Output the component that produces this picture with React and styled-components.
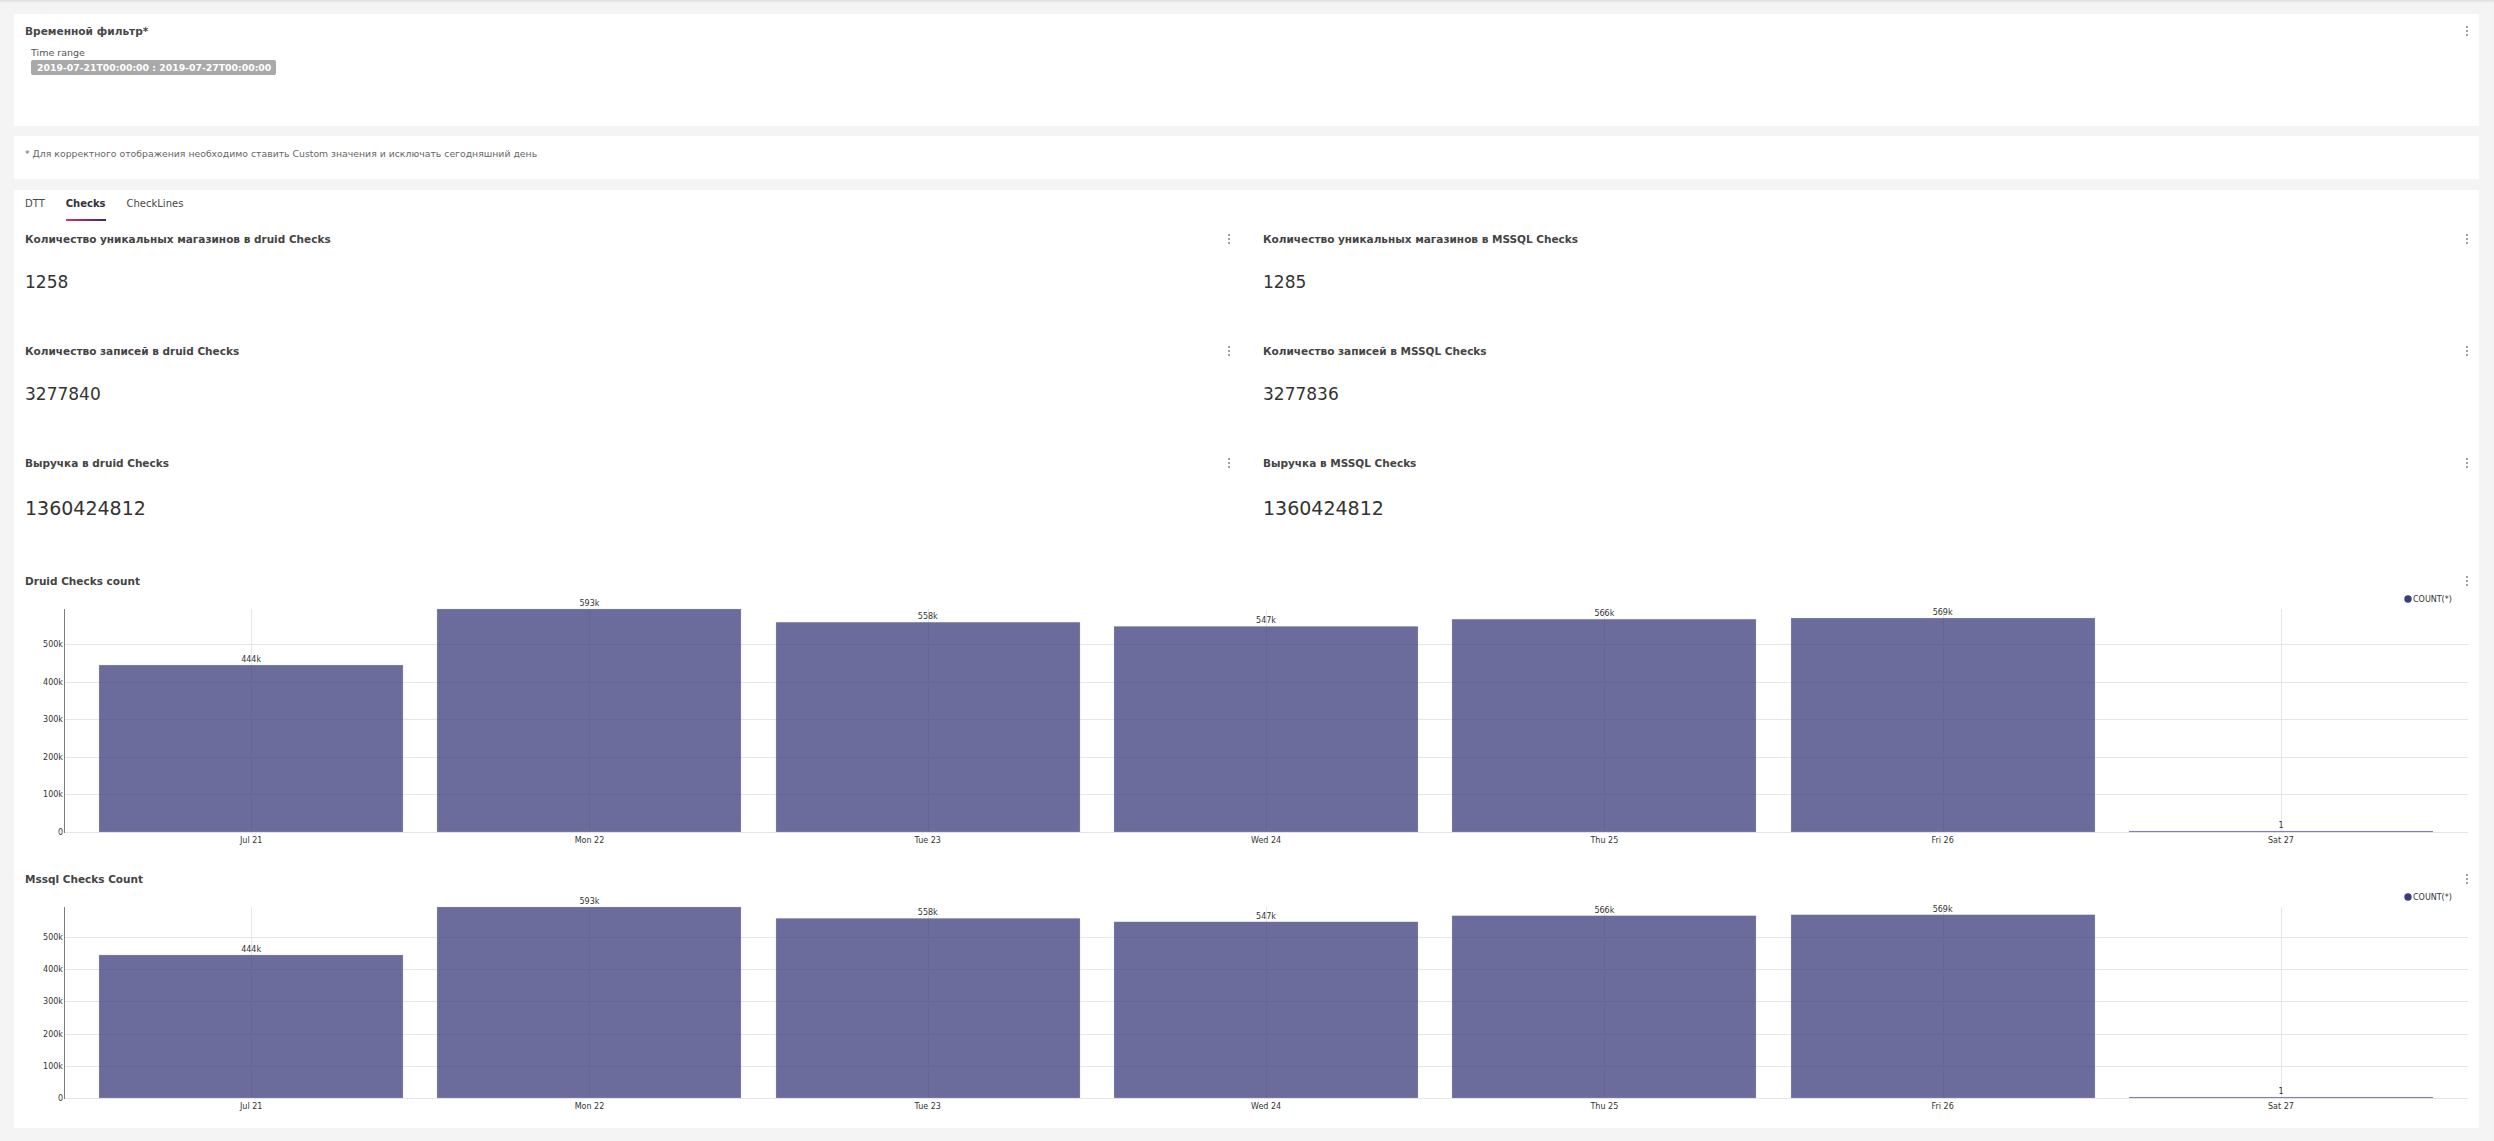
import React from 'react';
import styled, { createGlobalStyle } from 'styled-components';

const GlobalStyle = createGlobalStyle`
  html, body { margin: 0; padding: 0; background: #f4f4f4; }
  body { font-family: "DejaVu Sans", "Liberation Sans", sans-serif; color: #484848; }
  * { box-sizing: border-box; }
`;

const Page = styled.div`
  min-height: 1141px;
  padding: 14px 15px 13px 14px;
  display: flex;
  flex-direction: column;
  gap: 10px;
  box-shadow: inset 0 3px 3px -2px rgba(0, 0, 0, 0.12);
`;

const Card = styled.section`
  background: #fff;
  height: ${(p) => (p.$height ? `${p.$height}px` : 'auto')};
  padding: ${(p) => p.$pad};
  margin-top: ${(p) => p.$mt || 0}px;
  display: flex;
  flex-direction: column;
`;

const HeaderRow = styled.div`
  display: flex;
  align-items: center;
  justify-content: space-between;
  height: 14px;
`;

const FilterTitle = styled.h2`
  margin: 0;
  font-size: 10.6px;
  line-height: 14px;
  font-weight: bold;
  color: #484848;
`;

const FilterBody = styled.div`
  padding-left: 6px;
  margin-top: 9px;
  display: flex;
  flex-direction: column;
  align-items: flex-start;
`;

const FieldLabel = styled.div`
  font-size: 9.5px;
  line-height: 12px;
  color: #555;
`;

const RangeBadge = styled.span`
  margin-top: 1px;
  display: inline-block;
  height: 15px;
  line-height: 15px;
  padding: 0 5px 0 6px;
  background: #a9a9a9;
  color: #fff;
  font-weight: bold;
  font-size: 9.3px;
  border-radius: 2px;
  white-space: nowrap;
`;

const Note = styled.p`
  margin: 0;
  font-size: 9.3px;
  line-height: 12px;
  color: #666;
  white-space: nowrap;
`;

const Kebab = styled.span`
  display: inline-flex;
  flex-direction: column;
  align-items: center;
  gap: 2px;
  width: 6px;
  flex: none;
`;

const Dot = styled.i`
  display: block;
  width: 2px;
  height: 2px;
  background: #a0a0a0;
`;

const KebabMenu = () => (
  <Kebab aria-label="menu">
    <Dot />
    <Dot />
    <Dot />
  </Kebab>
);

const Tabs = styled.nav`
  display: flex;
  gap: 21px;
`;

const Tab = styled.div`
  display: flex;
  flex-direction: column;
  padding-top: 7px;
  gap: 8px;
`;

const TabLabel = styled.span`
  font-size: 10px;
  line-height: 14px;
  font-weight: ${(p) => (p.$active ? 'bold' : 'normal')};
  color: ${(p) => (p.$active ? '#323232' : '#484848')};
  white-space: nowrap;
`;

const TabLine = styled.span`
  display: block;
  height: 2px;
  background: ${(p) =>
    p.$active ? 'linear-gradient(90deg, #e0306b 0%, #8c2a6a 50%, #3a2b66 100%)' : 'transparent'};
`;

const NumberGrid = styled.div`
  margin-top: 11px;
  display: grid;
  grid-template-columns: 1fr 1fr;
  column-gap: 31px;
`;

const NumberWidget = styled.div`
  height: 112px;
  display: flex;
  flex-direction: column;
`;

const WidgetTitle = styled.h3`
  margin: 0;
  font-size: 10.5px;
  line-height: 14px;
  font-weight: bold;
  color: #444;
  white-space: nowrap;
`;

const BigValue = styled.div`
  margin-top: ${(p) => (p.$large ? 27 : 26)}px;
  font-size: ${(p) => (p.$large ? 19 : 17)}px;
  line-height: ${(p) => (p.$large ? 22 : 20)}px;
  color: #333;
`;

const ChartWidget = styled.div`
  margin-top: ${(p) => p.$mt || 0}px;
  display: flex;
  flex-direction: column;
`;

const ChartSvg = styled.svg`
  display: block;
  font-family: "DejaVu Sans", sans-serif;
`;

const DATA = [
  { label: 'Jul 21', value: 444000, text: '444k' },
  { label: 'Mon 22', value: 593000, text: '593k' },
  { label: 'Tue 23', value: 558000, text: '558k' },
  { label: 'Wed 24', value: 547000, text: '547k' },
  { label: 'Thu 25', value: 566000, text: '566k' },
  { label: 'Fri 26', value: 569000, text: '569k' },
  { label: 'Sat 27', value: 1, text: '1' },
];
const MAX = 593000;
const TICKS = [0, 100000, 200000, 300000, 400000, 500000];
const tickText = (t) => (t === 0 ? '0' : `${t / 1000}k`);

function BarChart({ height, plotBottom }) {
  const plotTop = 21;
  const axisX = 39;
  const right = 2443;
  const bandStart = 57;
  const step = 338.3;
  const barW = 304;
  const h = plotBottom - plotTop;
  const y = (v) => plotBottom - (v / MAX) * h;
  const cx = (i) => bandStart + step * i + step / 2;

  return (
    <ChartSvg width={2445} height={height} viewBox={`0 0 2445 ${height}`}>
      {TICKS.map((t) => (
        <line
          key={`h${t}`}
          x1={axisX}
          x2={right}
          y1={Math.round(y(t)) + 0.5}
          y2={Math.round(y(t)) + 0.5}
          stroke="#e6e6e6"
        />
      ))}
      {DATA.map((d, i) => (
        <line
          key={`v${d.label}`}
          x1={Math.round(cx(i)) + 0.5}
          x2={Math.round(cx(i)) + 0.5}
          y1={plotTop}
          y2={plotBottom}
          stroke="#e6e6e6"
        />
      ))}
      {DATA.map((d, i) => {
        const top = Math.min(y(d.value), plotBottom - 1);
        return (
          <rect
            key={`b${d.label}`}
            x={Math.round(cx(i) - barW / 2)}
            y={top}
            width={barW}
            height={plotBottom - top}
            fill="#393b7b"
            fillOpacity={0.75}
            stroke="#c9cadf"
            strokeOpacity={0.5}
            strokeWidth={0.5}
          />
        );
      })}
      <line x1={axisX + 0.5} x2={axisX + 0.5} y1={plotTop} y2={plotBottom + 1} stroke="#7d7d7d" />
      {TICKS.map((t) => (
        <text key={`t${t}`} x={axisX - 1} y={y(t) + 3} fontSize={8} fill="#333" textAnchor="end">
          {tickText(t)}
        </text>
      ))}
      {DATA.map((d, i) => {
        const top = Math.min(y(d.value), plotBottom - 1);
        return (
          <text key={`l${d.label}`} x={cx(i)} y={top - 3} fontSize={8} fill="#333" textAnchor="middle">
            {d.text}
          </text>
        );
      })}
      {DATA.map((d, i) => (
        <text key={`x${d.label}`} x={cx(i)} y={plotBottom + 11} fontSize={8} fill="#333" textAnchor="middle">
          {d.label}
        </text>
      ))}
      <circle cx={2383} cy={11} r={3.7} fill="#3b3d80" />
      <text x={2388} y={14} fontSize={8} fill="#333">
        COUNT(*)
      </text>
    </ChartSvg>
  );
}

const NUMBERS = [
  { title: 'Количество уникальных магазинов в druid Checks', value: '1258' },
  { title: 'Количество уникальных магазинов в MSSQL Checks', value: '1285' },
  { title: 'Количество записей в druid Checks', value: '3277840' },
  { title: 'Количество записей в MSSQL Checks', value: '3277836' },
  { title: 'Выручка в druid Checks', value: '1360424812', large: true },
  { title: 'Выручка в MSSQL Checks', value: '1360424812', large: true },
];

const TABS = [
  { name: 'DTT' },
  { name: 'Checks', active: true },
  { name: 'CheckLines' },
];

export default function App() {
  return (
    <>
      <GlobalStyle />
      <Page>
        <Card $height={112} $pad="10px 9px 0 11px">
          <HeaderRow>
            <FilterTitle>Временной фильтр*</FilterTitle>
            <KebabMenu />
          </HeaderRow>
          <FilterBody>
            <FieldLabel>Time range</FieldLabel>
            <RangeBadge>2019-07-21T00:00:00 : 2019-07-27T00:00:00</RangeBadge>
          </FilterBody>
        </Card>

        <Card $height={43} $pad="12px 11px">
          <Note>
            * Для корректного отображения необходимо ставить Custom значения и исключать сегодняшний день
          </Note>
        </Card>

        <Card $pad="0 9px 10px 11px" $mt={1}>
          <Tabs>
            {TABS.map((t) => (
              <Tab key={t.name}>
                <TabLabel $active={t.active}>{t.name}</TabLabel>
                <TabLine $active={t.active} />
              </Tab>
            ))}
          </Tabs>

          <NumberGrid>
            {NUMBERS.map((n) => (
              <NumberWidget key={n.title}>
                <HeaderRow>
                  <WidgetTitle>{n.title}</WidgetTitle>
                  <KebabMenu />
                </HeaderRow>
                <BigValue $large={n.large}>{n.value}</BigValue>
              </NumberWidget>
            ))}
          </NumberGrid>

          <ChartWidget $mt={6}>
            <HeaderRow>
              <WidgetTitle>Druid Checks count</WidgetTitle>
              <KebabMenu />
            </HeaderRow>
            <BarChart height={284} plotBottom={244} />
          </ChartWidget>

          <ChartWidget>
            <HeaderRow>
              <WidgetTitle>Mssql Checks Count</WidgetTitle>
              <KebabMenu />
            </HeaderRow>
            <BarChart height={232} plotBottom={212} />
          </ChartWidget>
        </Card>
      </Page>
    </>
  );
}
